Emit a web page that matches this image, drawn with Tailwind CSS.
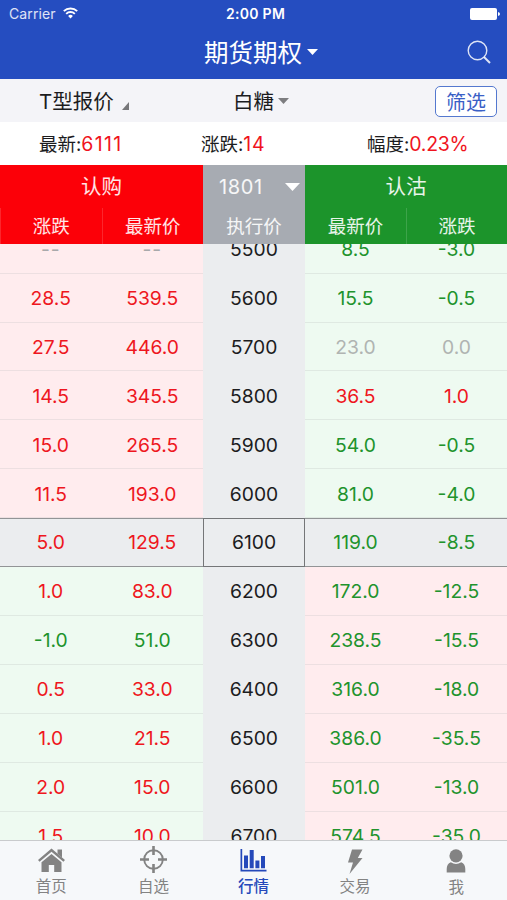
<!DOCTYPE html>
<html lang="zh-CN">
<head>
  <meta charset="utf-8">
  <meta name="viewport" content="width=device-width, initial-scale=1">
  <title>期货期权</title>
  <script src="https://cdn.jsdelivr.net/npm/@tailwindcss/browser@4"></script>
</head>
<body class="bg-white">
<div class="w-[507px] h-[900px] flex flex-col overflow-hidden font-['Inter','Noto_Sans_CJK_SC',sans-serif] text-[#1c1c1e]">

  <header class="h-[79px] shrink-0 bg-[#254dc0] text-white">
    <div class="h-[27px] grid grid-cols-3 items-center pl-[9px] pr-[7px]">
      <div class="flex items-center gap-[7px] text-[14px] text-white/85 tracking-[0.1px]">
        Carrier
        <svg class="-mt-[2px] w-[15px] h-[12px]" viewBox="0 0 15 12" fill="none" stroke="white" stroke-width="1.9">
          <path d="M0.8 4.2a9.5 9.5 0 0 1 13.4 0M3.2 6.8a6.1 6.1 0 0 1 8.6 0" />
          <path d="M7.5 11.4L5.1 8.9a3.4 3.4 0 0 1 4.8 0z" fill="white" stroke="none" />
        </svg>
      </div>
      <div class="pl-[2px] text-center text-[14px] font-semibold tracking-[0.3px]">2:00 PM</div>
      <svg class="justify-self-end w-[30px] h-[12px]" viewBox="0 0 30 12" fill="white">
        <rect width="27" height="12" rx="2" />
        <path d="M28 4q2 0.5 2 2t-2 2z" />
      </svg>
    </div>
    <div class="h-[52px] grid grid-cols-3 items-center">
      <div></div>
      <div class="flex items-center justify-center gap-[5px] pl-[15px] text-[24.5px] leading-none whitespace-nowrap">
        期货期权
        <svg class="-mt-[2px] w-[11px] h-[6px]" viewBox="0 0 11 6" fill="white"><path d="M0 0h11L5.500 6z" /></svg>
      </div>
      <svg class="justify-self-end mr-[16px] -mt-[2px] w-[24px] h-[24px]" viewBox="0 0 24 24" fill="none" stroke="white" stroke-opacity="0.85" stroke-width="1.4">
        <circle cx="10.500" cy="10.500" r="9.300" />
        <path d="M17 17l6 6" stroke-width="2" />
      </svg>
    </div>
  </header>

  <div class="h-[43px] shrink-0 bg-[#f4f4f8] grid grid-cols-3 items-center text-[20.5px] leading-none">
    <div class="flex items-center pl-[39px] pt-[3px] gap-[8px] whitespace-nowrap">
      T型报价
      <svg class="mt-[7px] w-[7px] h-[8px]" viewBox="0 0 7 8" fill="#77777a"><path d="M7 0v8H0z" /></svg>
    </div>
    <div class="flex items-center justify-center pl-[15px] pt-[3px] gap-[4px]">
      白糖
      <svg class="-mt-[3px] w-[11px] h-[6px]" viewBox="0 0 11 6" fill="#7d7d80"><path d="M0 0h11L5.500 6z" /></svg>
    </div>
    <button class="justify-self-end mr-[10px] mt-px pt-[3px] w-[62px] h-[31px] rounded-[5px] border border-[#5478cf] bg-white text-[#3a60c6] text-[20px] leading-none">筛选</button>
  </div>

  <div class="h-[43px] shrink-0 grid grid-cols-[162px_166px_1fr] items-center pl-[39px] pt-[2px] text-[18.5px] leading-none">
    <div>最新:<span class="text-[#f0141e] text-[19.5px] tracking-[1.3px]">6111</span></div>
    <div>涨跌:<span class="text-[#f0141e] text-[19.5px] tracking-[0.7px]">14</span></div>
    <div>幅度:<span class="text-[#f0141e] text-[19.5px] tracking-[-0.3px]">0.23%</span></div>
  </div>

  <div class="h-[79px] shrink-0 grid grid-cols-[101.5px_101.5px_102px_101px_101px] grid-rows-[43px_36px] text-center text-white/90 text-[18.5px] leading-none">
    <div class="col-span-2 bg-[#fc0008] flex items-center justify-center pt-[2px] text-[20.500px]">认购</div>
    <div class="bg-[#a7abb2] flex items-center justify-between pl-[16px] pr-[5px] text-[20px] tracking-[0.6px]">
      1801
      <svg class="w-[15px] h-[8px]" viewBox="0 0 15 8" fill="white"><path d="M0 0h15L7.500 8z" /></svg>
    </div>
    <div class="col-span-2 bg-[#1c942b] flex items-center justify-center pt-[2px] text-[20.500px]">认沽</div>
    <div class="bg-[#fc0008] border-l border-white/15 flex items-center justify-center">涨跌</div>
    <div class="bg-[#fc0008] border-l border-white/15 flex items-center justify-center">最新价</div>
    <div class="bg-[#a7abb2] flex items-center justify-center">执行价</div>
    <div class="bg-[#1c942b] flex items-center justify-center">最新价</div>
    <div class="bg-[#1c942b] border-l border-white/15 flex items-center justify-center">涨跌</div>
  </div>

  <main class="h-[596px] shrink-0 overflow-hidden">
    <div id="quotes" class="-mt-[19.2px] text-[19.3px] leading-none"></div>
  </main>

  <nav class="h-[60px] shrink-0 grid grid-cols-5 border-t border-[#c9cbcd] bg-[#f6f8fa] text-[#838383] text-[15.500px] leading-none">
    <div class="flex flex-col items-center pl-px pt-[7px] gap-[7px]">
      <svg class="w-[27px] h-[24px]" viewBox="0 0 27 24" fill="currentColor">
        <path d="M13.500 0.500L27 12l-1.600 1.700L13.500 3.800 1.600 13.700 0 12z" />
        <path d="M19.500 1.500H24v8l-4.500-3.800z" />
        <path d="M13.500 6L23.500 14.300V24h-7.300v-7h-5.400v7H3.500v-9.700z" />
      </svg>
      首页
    </div>
    <div class="flex flex-col items-center pl-[3px] pt-[5px] gap-[6px]">
      <svg class="w-[27px] h-[27px]" viewBox="0 0 27 27" fill="none" stroke="currentColor">
        <circle cx="13.500" cy="13.500" r="9.300" stroke-width="1.900" />
        <path d="M13.500 0v9M13.500 18v9M0 13.500h9M18 13.500h9" stroke-width="2.600" />
      </svg>
      自选
    </div>
    <div class="flex flex-col items-center pt-[7px] gap-[7px] text-[#2549ba] font-medium">
      <svg class="w-[27px] h-[24px]" viewBox="0 0 27 24" fill="currentColor">
        <path d="M0.500 1h1.700v20.800H26.500v1.700h-26z" />
        <path d="M4 7.500h4v12.800H4zM9.700 2h4v18.300h-4zM15.400 12.500h4v7.800h-4zM21 8h4v12.300h-4z" />
      </svg>
      行情
    </div>
    <div class="flex flex-col items-center pt-[8px] gap-[5px]">
      <svg class="w-[16px] h-[25px]" viewBox="0 0 16 25" fill="currentColor"><path d="M5 0.500h10.500L10.800 9H15.500L2.500 25 6 13.500H1z" /></svg>
      交易
    </div>
    <div class="flex flex-col items-center pt-[8px] gap-[7px]">
      <svg class="w-[20px] h-[24px]" viewBox="0 0 20 24" fill="currentColor">
        <circle cx="10" cy="6.800" r="6.600" />
        <path d="M4.800 13.300Q10 16.500 15.200 13.300Q19.300 15 19.300 20v3.500H0.700V20Q0.700 15 4.800 13.300z" />
      </svg>
      我
    </div>
  </nav>
</div>

<script>
  const ATM = 6100;

  // call change, call price, strike, put price, put change
  const rows = [
    ["--", "--", 5500, "8.5", "-3.0"],
    ["28.5", "539.5", 5600, "15.5", "-0.5"],
    ["27.5", "446.0", 5700, "23.0", "0.0"],
    ["14.5", "345.5", 5800, "36.5", "1.0"],
    ["15.0", "265.5", 5900, "54.0", "-0.5"],
    ["11.5", "193.0", 6000, "81.0", "-4.0"],
    ["5.0", "129.5", 6100, "119.0", "-8.5"],
    ["1.0", "83.0", 6200, "172.0", "-12.5"],
    ["-1.0", "51.0", 6300, "238.5", "-15.5"],
    ["0.5", "33.0", 6400, "316.0", "-18.0"],
    ["1.0", "21.5", 6500, "386.0", "-35.5"],
    ["2.0", "15.0", 6600, "501.0", "-13.0"],
    ["1.5", "10.0", 6700, "574.5", "-35.0"],
  ];

  const color = (change) => {
    if (change === "--") return "text-[#a9a9ab] tracking-[1px]";
    const n = parseFloat(change);
    return n > 0 ? "text-[#ee1620]" : n < 0 ? "text-[#21932c]" : "text-[#b0b4b2]";
  };

  const pink = "bg-[#ffecee] border-b border-[#eddfe1] pt-[2px]";
  const mint = "bg-[#eefaf1] border-b border-[#dfe9e2] pt-[2px]";
  const cell = "flex items-center justify-center";

  document.getElementById("quotes").innerHTML = rows.map(([cc, cp, strike, pp, pc]) => {
    const atm = strike === ATM;
    const left = atm ? "bg-[#ebedef] border-y border-[#929496]" : strike < ATM ? pink : mint;
    const right = atm ? "bg-[#ebedef] border-y border-[#929496]" : strike < ATM ? mint : pink;
    const mid = atm ? "bg-[#ebedef] border border-[#747678]" : "bg-[#ebedef] pt-px";
    return `<div class="grid grid-cols-[101.5px_101.5px_102px_101px_101px] h-[48.9px]">
      <div class="${cell} ${left} ${color(cc)}">${cc}</div>
      <div class="${cell} ${left} ${color(cc)}">${cp}</div>
      <div class="${cell} ${mid}">${strike}</div>
      <div class="${cell} ${right} ${color(pc)}">${pp}</div>
      <div class="${cell} ${right} ${color(pc)}">${pc}</div>
    </div>`;
  }).join("");
</script>
</body>
</html>
